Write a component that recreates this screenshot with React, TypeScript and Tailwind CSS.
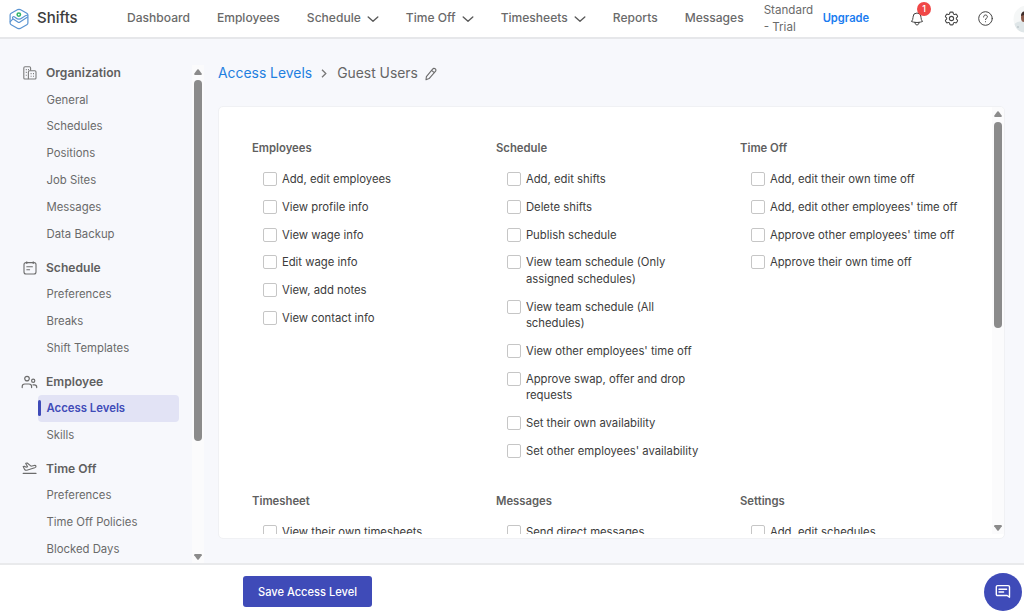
import { useState } from 'react'
import type { ReactNode } from 'react'
import { HiOutlineBell, HiOutlineCog6Tooth } from 'react-icons/hi2'

// ── Icons ─────────────────────────────────────────────────────

function LogoIcon() {
  return (
    <svg width="20" height="22" viewBox="0 0 20 22" fill="none" strokeLinejoin="round" strokeLinecap="round">
      <path d="M8.8 1.6c.8-.4 1.6-.4 2.400 0l6.600 3.700c.7.4 1.100 1 1.100 1.800v7.800c0 .8-.4 1.400-1.100 1.800l-6.600 3.700c-.8.4-1.600.4-2.400 0l-6.600-3.700c-.7-.4-1.100-1-1.100-1.800V7.100c0-.8.4-1.400 1.100-1.800Z" stroke="#5a94d2" strokeWidth="1.200" />
      <path d="M1.300 13.600 4 10.900c-.9-.9-.6-2.300.6-2.400 1.300 0 2.600 2.700 5.400 2.700 2.400 0 4.800-3.400 8.600-4.200M4.200 10.900l4.600 3.200c.7.5 1.500.5 2.200 0l7.600-5" stroke="#5a94d2" strokeWidth="1.200" />
      <circle cx="9.800" cy="6.600" r="1.700" stroke="#2fb46a" strokeWidth="1.500" />
    </svg>
  )
}

function ChevronIcon() {
  return (
    <svg width="12" height="8" viewBox="0 0 12 8" fill="none" stroke="#5a5a5a" strokeWidth="1.4" strokeLinecap="round" strokeLinejoin="round" className="mt-px">
      <path d="M1.200 2 6 6.200 10.800 2" />
    </svg>
  )
}

function BuildingIcon() {
  return (
    <svg width="14" height="14" viewBox="0 0 14 14" fill="none" stroke="#7c7c7c" strokeWidth="1.1" strokeLinejoin="round">
      <path d="M5.200 13H1.800C1.100 13 .8 12.700.8 12V2C.8 1.200 1.200.8 2 .8h4.400c.8 0 1.200.4 1.200 1.200v2.400" />
      <path d="M5.400 13V5.900c0-.8.4-1.200 1.200-1.200h5.200c.8 0 1.200.4 1.200 1.200V12c0 .7-.3 1-1 1Z" />
      <path d="M2.800 3.600h1M5 3.600h1M2.800 6.400h1M2.800 9.200h1M7.600 7.600h1M10 7.600h1M7.600 10.200h1M10 10.200h1" />
    </svg>
  )
}

function CalendarIcon() {
  return (
    <svg width="14" height="14" viewBox="0 0 14 14" fill="none" stroke="#6c6c6c" strokeWidth="1.1" strokeLinecap="round">
      <rect x="1" y="1.600" width="12" height="11.400" rx="2" />
      <path d="M3.800.800v1.600M10.200.800v1.600M3.800 5.800h5.600M3.800 8.800h2.800" />
    </svg>
  )
}

function PeopleIcon() {
  return (
    <svg width="17" height="14" viewBox="0 0 17 14" fill="none" stroke="#6c6c6c" strokeWidth="1.2" strokeLinecap="round">
      <circle cx="6" cy="3.600" r="2.300" />
      <circle cx="12.200" cy="5.800" r="1.600" />
      <path d="M1.200 12.600v-1c0-1.600 1-2.600 2.600-2.600h4.200c1.600 0 2.600 1 2.600 2.600v1M12 9.800h1.400c1.400 0 2.300.8 2.300 2.200v.6" />
    </svg>
  )
}

function PlaneIcon() {
  return (
    <svg width="15" height="13" viewBox="0 0 15 13" fill="none" stroke="#6c6c6c" strokeWidth="1.100" strokeLinejoin="round" strokeLinecap="round">
      <path d="M1.200 4.600 2.400 4.200 4.200 5.200 5.600 4.800 3.700 1.400 5.200 1 9 4.200 12 3.500c1-.2 1.800.1 2 .7.200.7-.4 1.300-1.300 1.600L4.800 8.200c-1 .3-1.700 0-2.200-.8Z" />
      <path d="M1.200 11.400h12.800" />
    </svg>
  )
}

function PencilIcon() {
  return (
    <svg width="12" height="14" viewBox="0 0 12 14" fill="none" stroke="#6c6c6c" strokeWidth="1.100" strokeLinejoin="round" strokeLinecap="round" className="mt-px">
      <path d="M1 12.800 1.400 9.600 7.600 2.200c.8-1 1.800-1.100 2.600-.4.900.7 1 1.700.2 2.600l-6.300 7.200ZM6.600 3.400l2.800 2.300" />
    </svg>
  )
}

function ChatIcon() {
  return (
    <svg width="16" height="15" viewBox="0 0 16 15" fill="none" stroke="#fff" strokeWidth="1.400" strokeLinejoin="round" strokeLinecap="round">
      <path d="M2.600 1.600h10.600c.8 0 1.300.5 1.300 1.300v10.400l-2.400-1.800H2.600c-.8 0-1.300-.5-1.300-1.300V2.900c0-.8.500-1.300 1.300-1.300Z" />
      <path d="M4 5.200h7.600M4 8h4.600" />
    </svg>
  )
}

function Avatar() {
  return (
    <svg width="11" height="28" viewBox="0 0 11 28">
      <circle cx="14" cy="14" r="13.500" fill="#f5f7f7" />
      <path d="M1.500 19c2-2 6-3 9.500-2.500V27.500C6 27 2.500 23.500 1.500 19Z" fill="#dfe6e8" />
      <ellipse cx="11" cy="12.500" rx="3" ry="4.500" fill="#8b5a4a" />
      <path d="M8 11c0-3 1.500-4.500 3-4.500V10Z" fill="#3b2a28" />
      <circle cx="5" cy="22" r=".8" fill="#a8b4b8" />
    </svg>
  )
}

// ── Data ──────────────────────────────────────────────────────

const navItems = [
  { label: 'Dashboard' },
  { label: 'Employees' },
  { label: 'Schedule', menu: true },
  { label: 'Time Off', menu: true },
  { label: 'Timesheets', menu: true },
  { label: 'Reports' },
  { label: 'Messages' },
]

const sections: { title: string; icon: ReactNode; items: string[] }[] = [
  { title: 'Organization', icon: <BuildingIcon />, items: ['General', 'Schedules', 'Positions', 'Job Sites', 'Messages', 'Data Backup'] },
  { title: 'Schedule', icon: <CalendarIcon />, items: ['Preferences', 'Breaks', 'Shift Templates'] },
  { title: 'Employee', icon: <PeopleIcon />, items: ['Access Levels', 'Skills'] },
  { title: 'Time Off', icon: <PlaneIcon />, items: ['Preferences', 'Time Off Policies', 'Blocked Days'] },
]

const groups = [
  { title: 'Employees', items: ['Add, edit employees', 'View profile info', 'View wage info', 'Edit wage info', 'View, add notes', 'View contact info'] },
  {
    title: 'Schedule',
    items: [
      'Add, edit shifts', 'Delete shifts', 'Publish schedule',
      'View team schedule (Only assigned schedules)', 'View team schedule (All schedules)',
      "View other employees' time off", 'Approve swap, offer and drop requests',
      'Set their own availability', "Set other employees' availability",
    ],
  },
  { title: 'Time Off', items: ['Add, edit their own time off', "Add, edit other employees' time off", "Approve other employees' time off", 'Approve their own time off'] },
  { title: 'Timesheet', items: ['View their own timesheets'] },
  { title: 'Messages', items: ['Send direct messages'] },
  { title: 'Settings', items: ['Add, edit schedules'] },
]

// ── Pieces ────────────────────────────────────────────────────

function ScrollBar({ thumb }: { thumb: string }) {
  return (
    <div className="flex h-full w-3 shrink-0 flex-col items-center bg-[#fbfbfc]">
      <svg width="8" height="6" viewBox="0 0 8 6" className="mt-[3.5px] shrink-0" fill="#8b8b8b"><path d="M3.300.600Q4 0 4.700.600L7.800 4.800Q8 6 7 6H1Q0 6 .2 4.800Z" /></svg>
      <div className={`mt-[5px] w-2 shrink-0 rounded-full bg-[#8b8b8b] ${thumb}`} />
      <svg width="8" height="6" viewBox="0 0 8 6" className="mb-[3px] mt-auto shrink-0" fill="#8b8b8b"><path d="M3.300 5.400Q4 6 4.700 5.400L7.800 1.200Q8 0 7 0H1Q0 0 .2 1.200Z" /></svg>
    </div>
  )
}

function Header() {
  return (
    <header className="flex h-[39px] shrink-0 items-center border-b-2 border-[#e6e7ea] bg-white text-[12.07px] font-medium text-[#6a6a6a]">
      <div className="ml-[9px] flex w-[118px] items-center gap-2">
        <LogoIcon />
        <span className="text-[15px] font-medium text-[#3c3c3c]">Shifts</span>
      </div>
      <nav className="flex items-center gap-[27px]">
        {navItems.map(n => (
          <a key={n.label} className="flex items-center gap-1.5">
            {n.label}
            {n.menu && <ChevronIcon />}
          </a>
        ))}
      </nav>
      <div className="ml-5 w-[59px] text-[11.6px] font-normal leading-[17px]">Standard<br />- Trial</div>
      <a className="text-[11.2px] font-semibold text-[#1a7cf0]">Upgrade</a>
      <div className="ml-auto flex items-center text-[#444]">
        <div className="relative mr-[18px]">
          <HiOutlineBell size={16} />
          <span className="absolute -top-[9px] left-2 flex h-3.5 w-3.5 items-center justify-center rounded-full bg-[#f04747] text-[9px] font-medium leading-none text-white">1</span>
        </div>
        <HiOutlineCog6Tooth size={17} className="mr-[18px]" />
        <svg width="15" height="15" viewBox="0 0 15 15" fill="none" stroke="#444" strokeWidth="1" strokeLinecap="round" className="mr-[20px]">
          <circle cx="7.500" cy="7.500" r="6.800" />
          <path d="M5.600 6c0-1.200.8-2 1.900-2s1.900.7 1.900 1.800c0 1.300-1.900 1.400-1.900 2.800M7.500 10.700v.1" />
        </svg>
        <Avatar />
      </div>
    </header>
  )
}

function Sidebar() {
  return (
    <aside className="flex w-[205px] shrink-0 pt-[26px]">
      <div className="flex w-[192px] flex-col gap-[7.2px] overflow-hidden pl-[21px] pt-[0.3px]">
        {sections.map(s => (
          <section key={s.title} className="-mt-[5px] mb-[5px]">
            <h3 className="flex h-[26.4px] items-center text-[12.1px] font-semibold text-[#5f5f5f]">
              <span className="flex w-[25px] items-center"><span className="flex w-[17px] justify-center">{s.icon}</span></span>
              {s.title}
            </h3>
            {s.items.map(item => {
              const active = item === 'Access Levels'
              return (
                <a key={item} className={`ml-[17px] flex h-[26.8px] w-[141px] items-center rounded text-[11.35px] ${active ? 'bg-[#e2e3f5] font-semibold text-[#3f4bb8]' : 'text-[#6a6a6a]'}`}>
                  <span className={`mr-[5.5px] h-4 w-[3px] rounded-sm ${active ? 'bg-[#3f4bb8]' : ''}`} />
                  {item}
                </a>
              )
            })}
          </section>
        ))}
      </div>
      <ScrollBar thumb="h-[361px]" />
    </aside>
  )
}

function Permission({ label }: { label: string }) {
  const [checked, setChecked] = useState(false)
  return (
    <label className="flex items-start gap-[5.3px] pb-[11px] text-[11.3px] leading-[16.67px] text-[#3c3c3c]">
      <input
        type="checkbox"
        checked={checked}
        onChange={e => setChecked(e.target.checked)}
        className="mt-[1px] h-3.5 w-3.5 shrink-0 appearance-none rounded-[2px] border border-[#c6c6c6] bg-white checked:bg-[#3f4bb8]"
      />
      <span>{label}</span>
    </label>
  )
}

export default function App() {
  return (
    <div className="flex h-[614px] w-[1024px] flex-col overflow-hidden bg-[#f7f8fc] font-['Inter',sans-serif]">
      <Header />

      <div className="flex min-h-0 flex-1">
        <Sidebar />
        <main className="flex flex-1 flex-col pl-[13px] pr-[19px]">
          <div className="flex h-[67px] items-center pt-px text-[13.9px] text-[#666]">
            <a className="text-[#1f7fe0]">Access Levels</a>
            <svg width="6" height="9" viewBox="0 0 6 9" fill="none" stroke="#777" strokeWidth="1.300" className="ml-[9px] mr-2.5 mt-px"><path d="M1 .800 4.800 4.500 1 8.200" /></svg>
            <span className="mr-[7px]">Guest Users</span>
            <PencilIcon />
          </div>

          <div className="flex h-[433px] overflow-hidden rounded-[5px] border border-[#f0f1f4] bg-white pb-1">
            <div className="grid flex-1 grid-cols-[244px_244px_244px] grid-rows-[353px_353px] content-start overflow-hidden pl-[33px] pt-[33px]">
              {groups.map(g => (
                <section key={g.title} className="w-[218px]">
                  <h4 className="mb-[15.3px] text-[11.3px] font-semibold leading-4 text-[#5f5f5f]">{g.title}</h4>
                  <div className="pl-[10.6px]">
                    {g.items.map(item => <Permission key={item} label={item} />)}
                  </div>
                </section>
              ))}
            </div>
            <ScrollBar thumb="h-[206px]" />
          </div>
        </main>
      </div>

      <footer className="flex h-[51px] shrink-0 items-center border-t-2 border-[#e9eaec] bg-white">
        <button className="ml-[243px] mt-[4px] h-[31px] w-[129px] rounded-[3px] bg-[#3f4bb8] pt-px text-[11.1px] font-medium text-white">Save Access Level</button>
        <button className="ml-auto mr-0.5 mt-[4px] flex h-[38px] w-[38px] items-center justify-center rounded-full bg-[#3f4bb8]">
          <ChatIcon />
        </button>
      </footer>
    </div>
  )
}
